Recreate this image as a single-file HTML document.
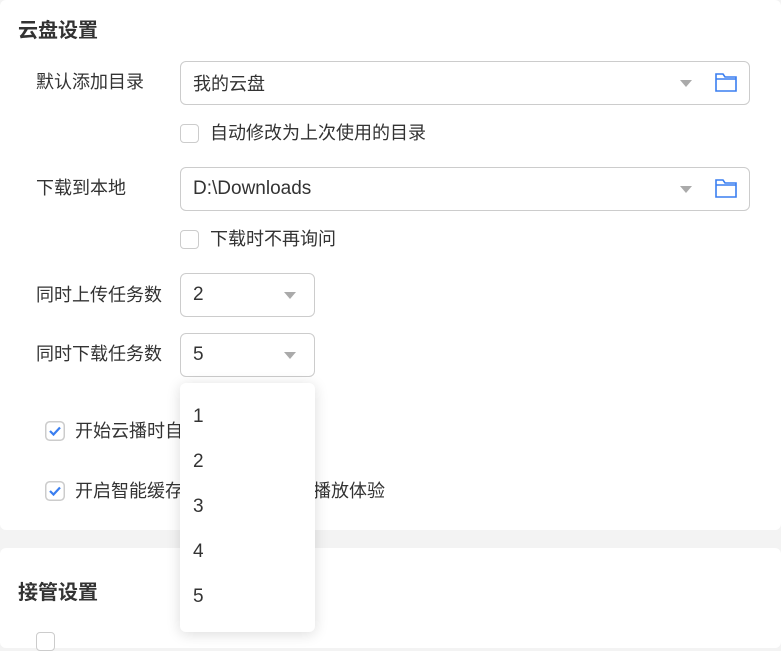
<!DOCTYPE html>
<html><head><meta charset="utf-8"><style>
body{margin:0;width:781px;height:635px;overflow:hidden;background:#f3f3f3;font-family:"Liberation Sans","Noto Sans CJK SC",sans-serif;color:#333;position:relative}
.card{position:absolute;left:0;right:0;background:#fff;border-radius:6px}
.t{position:absolute;font-size:20px;font-weight:bold;color:#333;line-height:24px}
.l{position:absolute;font-size:18px;color:#333;line-height:22px}
.in{position:absolute;border:1.5px solid #ccc;border-radius:6px;box-sizing:border-box;background:#fff}
.in span{position:absolute;left:12px;top:50%;transform:translateY(-50%);font-size:18px;color:#333}
.ar{position:absolute;width:0;height:0;border-left:6px solid transparent;border-right:6px solid transparent;border-top:7px solid #aaa;top:18px}
.cb{position:absolute;width:19px;height:19px;border:1.5px solid #ccc;border-radius:4px;box-sizing:border-box;background:#fff}
.dd{position:absolute;left:180px;top:383px;width:135px;height:249px;background:#fff;border-radius:6px;box-shadow:0 2px 14px rgba(0,0,0,.14)}
.dd div{position:absolute;left:13px;font-size:19px;color:#333;line-height:22px}
</style></head><body>
<div class="card" style="top:0;height:530px"></div>
<div class="card" style="top:548px;height:100px"></div>
<div class="t" style="left:18px;top:19px">云盘设置</div>
<div class="l" style="left:36px;top:71px">默认添加目录</div>
<div class="in" style="left:180px;top:61px;width:570px;height:44px"><span>我的云盘</span><div class="ar" style="left:499px"></div>
<svg style="position:absolute;left:534px;top:11px" width="22" height="19" viewBox="0 0 22 19"><path d="M1 1h7l2 3h11v14H1z M1 6h20" fill="none" stroke="#3a7ef0" stroke-width="1.6"/></svg></div>
<div class="cb" style="left:180px;top:124px"></div>
<div class="l" style="left:210px;top:122px">自动修改为上次使用的目录</div>
<div class="l" style="left:36px;top:177px">下载到本地</div>
<div class="in" style="left:180px;top:167px;width:570px;height:44px"><span style="font-size:19px">D:\Downloads</span><div class="ar" style="left:499px"></div>
<svg style="position:absolute;left:534px;top:11px" width="22" height="19" viewBox="0 0 22 19"><path d="M1 1h7l2 3h11v14H1z M1 6h20" fill="none" stroke="#3a7ef0" stroke-width="1.6"/></svg></div>
<div class="cb" style="left:180px;top:230px"></div>
<div class="l" style="left:210px;top:228px">下载时不再询问</div>
<div class="l" style="left:36px;top:284px">同时上传任务数</div>
<div class="in" style="left:180px;top:273px;width:135px;height:44px"><span style="font-size:19px">2</span><div class="ar" style="left:103px"></div></div>
<div class="l" style="left:36px;top:343px">同时下载任务数</div>
<div class="in" style="left:180px;top:333px;width:135px;height:44px"><span style="font-size:19px">5</span><div class="ar" style="left:103px"></div></div>
<svg style="position:absolute;left:45px;top:421px" width="20" height="20"><rect x=".75" y=".75" width="18.5" height="18.5" rx="4" fill="#fff" stroke="#ccc" stroke-width="1.5"/><path d="M5 10l3.5 3.5L15 6.5" fill="none" stroke="#3a7ef0" stroke-width="2.2"/></svg>
<div class="l" style="left:75px;top:420px">开始云播时自</div>
<svg style="position:absolute;left:45px;top:481px" width="20" height="20"><rect x=".75" y=".75" width="18.5" height="18.5" rx="4" fill="#fff" stroke="#ccc" stroke-width="1.5"/><path d="M5 10l3.5 3.5L15 6.5" fill="none" stroke="#3a7ef0" stroke-width="2.2"/></svg>
<div class="l" style="left:75px;top:480px">开启智能缓存<span style="margin-left:130px">播放体验</span></div>
<div class="t" style="left:18px;top:581px">接管设置</div>
<div class="cb" style="left:36px;top:632px"></div>
<div class="dd"><div style="top:23px">1</div><div style="top:68px">2</div><div style="top:113px">3</div><div style="top:158px">4</div><div style="top:203px">5</div></div>
</body></html>
